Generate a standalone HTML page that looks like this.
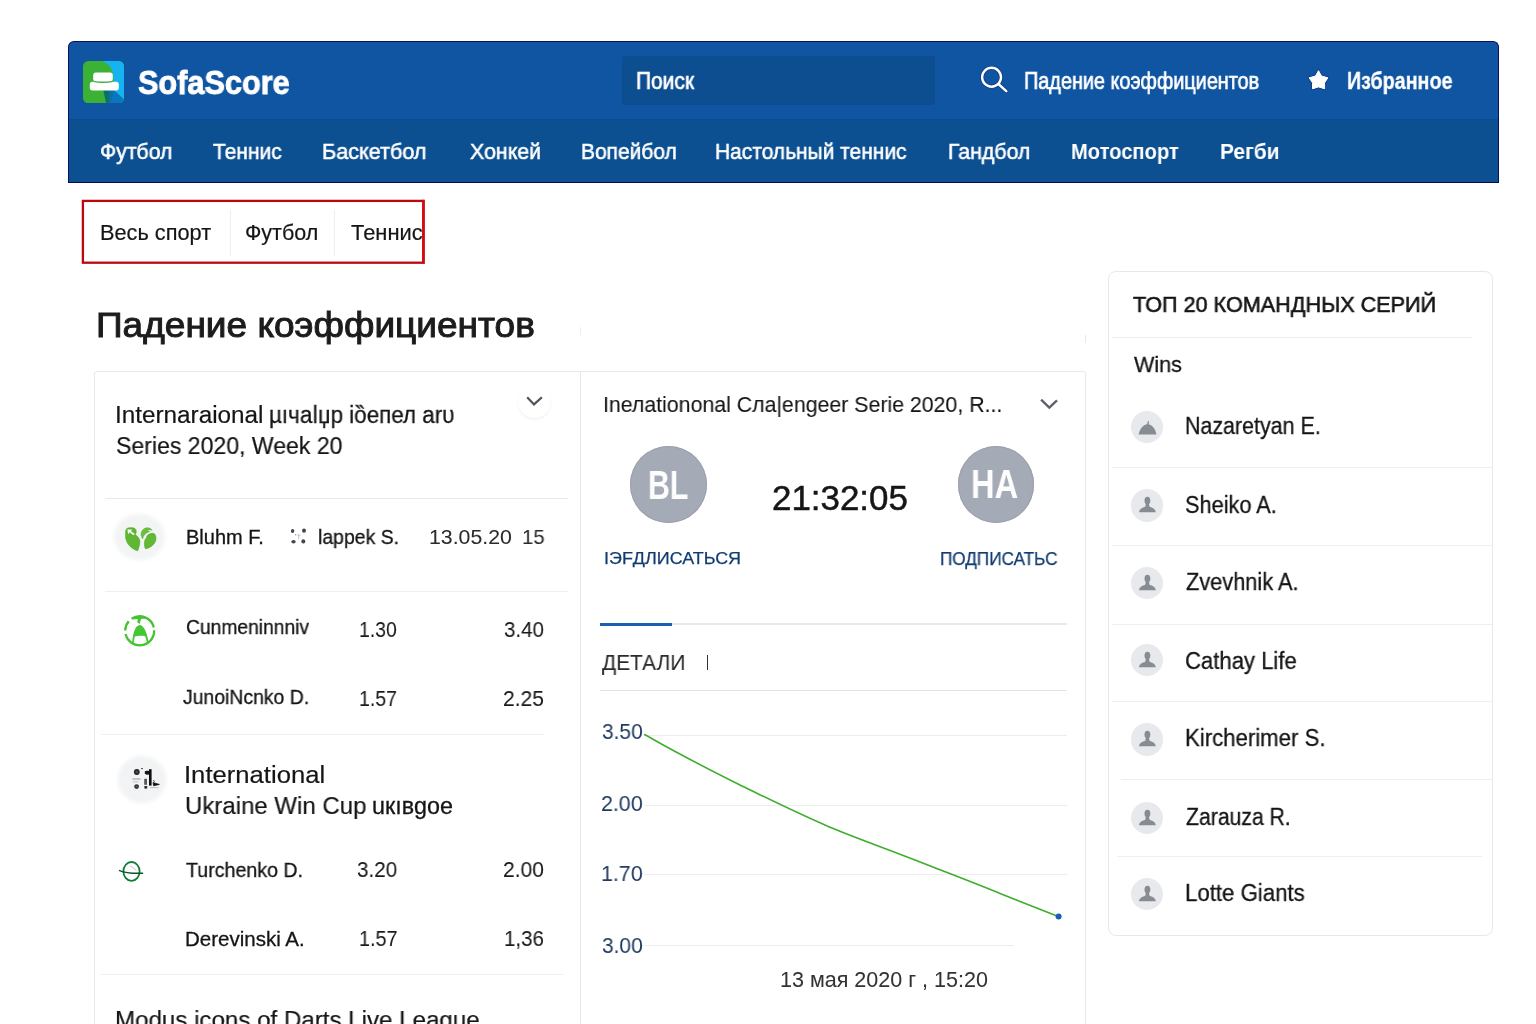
<!DOCTYPE html>
<html lang="ru">
<head>
<meta charset="utf-8">
<title>SofaScore</title>
<style>
*{box-sizing:border-box;margin:0;padding:0}
html,body{width:1536px;height:1024px;overflow:hidden;background:#fff}
body{position:relative;font-family:"Liberation Sans",sans-serif;color:#1b1b1b}
.abs{position:absolute;white-space:nowrap;line-height:1}
.t{transform-origin:0 0;will-change:transform}
#hdr{position:absolute;left:68px;top:41px;width:1431px;height:142px;background:#1055a2;border-radius:6px 6px 0 0;border:1px solid #07105e;border-bottom-color:#050a4e;overflow:hidden}
#nav{position:absolute;left:0;top:77px;width:100%;height:64px;background:#0c5091;border-top:1px solid #0b4c8b}
.hl{position:absolute;height:1px;background:#e9e9e9}
.vl{position:absolute;width:1px;background:#e9e9e9}
.circ{position:absolute;border-radius:50%}
.av{position:absolute;width:32.4px;height:32.4px;border-radius:50%;background:#e7e9ec;left:1130.8px}
</style>
</head>
<body>

<!-- HEADER -->
<div id="hdr"><div id="nav"></div></div>
<svg class="abs" style="left:82.6px;top:60.6px" width="41" height="42.4" viewBox="0 0 41 42.4">
  <defs><clipPath id="lc"><rect x="0" y="0" width="41" height="42.4" rx="5.5"/></clipPath></defs>
  <g clip-path="url(#lc)">
    <rect width="41" height="43" fill="#3bb135"/>
    <path d="M19.5 0 H41 V43 H24 L31 30 L30.6 18 C30.6 9 26.8 3.4 19.5 0Z" fill="#15b4f0"/>
    <path d="M31 29 L41 38.6 V43 H25 Z" fill="#0b76c0"/>
    <path d="M20.3 29 H31 L27 43 H23.2 Z" fill="#0d6f68"/>
    <path d="M26 29 H31 L27.4 43 H25.6 Z" fill="#0b72a0"/>
  </g>
  <rect x="10.2" y="11.6" width="19.6" height="8.8" rx="2.6" fill="#fff"/>
  <rect x="6.8" y="20.8" width="29" height="8.6" rx="2.6" fill="#fff"/>
  <path d="M11 20.6 C16 21.8 24 21.8 29.4 20.6" stroke="#1f9a2e" stroke-width="0.9" fill="none"/>
</svg>
<div class="abs" style="left:622px;top:56px;width:313px;height:48.6px;background:#0c4e90;border-radius:3px"></div>
<svg class="abs" style="left:977px;top:64px" width="34" height="32" viewBox="0 0 34 32"><g fill="none" stroke="#0b3a84" stroke-linecap="round"><circle cx="14.55" cy="13.25" r="9.45" stroke-width="3.8"/><path d="M21.6 20.2 L29.3 27.1" stroke-width="4"/></g><g fill="none" stroke="#fff" stroke-linecap="round"><circle cx="14.55" cy="13.25" r="9.45" stroke-width="2.4"/><path d="M21.4 20 L29.3 27.1" stroke-width="2.5"/></g></svg>
<svg class="abs" style="left:1307px;top:68px" width="24" height="24" viewBox="0 0 24 24"><path d="M11.5 2.6 L14.5 8 L20.9 9.8 L17.5 14.9 L17.7 20.8 L11.5 18.9 L5.5 20.8 L5.6 14.9 L2.1 9.8 L8.5 8 Z" fill="#0b3c85" stroke="#0b3c85" stroke-width="2.6" stroke-linejoin="round"/><path d="M11.5 2.6 L14.5 8 L20.9 9.8 L17.5 14.9 L17.7 20.8 L11.5 18.9 L5.5 20.8 L5.6 14.9 L2.1 9.8 L8.5 8 Z" fill="#fff" stroke="#fff" stroke-width="1" stroke-linejoin="round"/></svg>

<!-- MAIN CARD FRAME -->
<div class="abs" style="left:94px;top:371px;width:992px;height:700px;border:1px solid #e7e8e9;border-radius:3px"></div>
<div class="vl" style="left:580px;top:371px;height:660px;background:#e6e6e6"></div>

<!-- left card dividers -->
<div class="hl" style="left:105px;top:498px;width:463px"></div>
<div class="hl" style="left:105px;top:591px;width:463px;background:#efefef"></div>
<div class="hl" style="left:101px;top:734px;width:443px;background:#f1f1f1"></div>
<div class="hl" style="left:100px;top:974px;width:464px;background:#f0f0f0"></div>

<!-- chevrons -->
<div class="circ" style="left:517.5px;top:384.5px;width:33px;height:33px;background:#fff;box-shadow:0 1.5px 2.5px rgba(0,0,0,0.055)"></div>
<svg class="abs" style="left:524px;top:394px" width="20" height="14" viewBox="0 0 20 14"><path d="M3.2 3.2 L10 10.4 L17.9 3.2" fill="none" stroke="#50535a" stroke-width="2.2"/></svg>
<svg class="abs" style="left:1039px;top:397px" width="20" height="14" viewBox="0 0 20 14"><path d="M2.1 2.7 L10.3 10.6 L18 3.3" fill="none" stroke="#5d6068" stroke-width="2.3"/></svg>

<!-- left card icons -->
<div class="circ" style="left:111px;top:511px;width:57px;height:52px;background:radial-gradient(closest-side,#f2f5f4 78%,rgba(242,245,244,0) 100%)"></div>
<svg class="abs" style="left:123px;top:526px" width="36" height="28" viewBox="0 0 36 28">
  <path d="M2.6 6 C2.4 3 4.2 1.8 6.5 1.8 L10 1.8 C12.6 2 13.6 4.4 13.2 6.6 L12.2 8.6 C14.8 10.4 16.6 12.6 16.9 15.2 C16.9 18.6 15.8 22 14.6 24.8 C9.2 23.2 3.6 18.4 2.7 12 Z" fill="#5fb733" stroke="#4ea42a" stroke-width="0.6"/>
  <path d="M4.4 3.6 L9.4 3.4 L7.9 5 L11.6 8 L10.4 9.3 L6.8 6.2 L5.2 8.2 Z" fill="#fbfdfb"/>
  <path d="M18.2 9.6 C17.6 5.4 20.2 2.2 24 1.8 C26.4 1.7 28.2 2.8 29.2 4.2 L23 7.2 L20.4 10.2 L19.6 13 Z" fill="#6cc13c" stroke="#4ea42a" stroke-width="0.5"/>
  <path d="M24.2 9.6 C26.6 7.4 29.6 6.6 31.4 7.8 C33.2 9.6 33.4 12.6 32.4 15.4 C30.6 19.4 26.6 22 22.4 22.8 C21 19.4 21.2 16 22.2 13.2 L23.2 12.6 Z" fill="#62b935" stroke="#4ea42a" stroke-width="0.6"/>
  <path d="M25.4 4.6 L28.6 4.6 M26.8 5.8 L29.4 6" stroke="#f4f6f6" stroke-width="0.9" fill="none"/>
</svg>
<svg class="abs" style="left:286px;top:524px" width="24" height="24" viewBox="0 0 24 24"><g fill="#43464b"><ellipse cx="6.6" cy="7" rx="1.7" ry="2.1"/><ellipse cx="18" cy="6.6" rx="2" ry="2.2"/><ellipse cx="7.5" cy="17.8" rx="2.2" ry="1.8"/><ellipse cx="17.3" cy="17.4" rx="2" ry="2.1"/></g><path d="M10.8 11 H14.6 M12.7 11 V15.2" stroke="#b9bbbf" stroke-width="0.9" fill="none"/><circle cx="9.4" cy="10.8" r="0.7" fill="#9a9da3"/></svg>

<svg class="abs" style="left:122px;top:613px" width="36" height="36" viewBox="0 0 36 36">
  <path d="M32.19 17.29 A14.5 14.5 0 0 1 3.57 21.06 M3.20 17.55 A14.5 14.5 0 0 1 6.76 8.29 M9.59 5.78 A14.5 14.5 0 0 1 31.83 14.54" fill="none" stroke="#43c531" stroke-width="2.3"/>
  <path d="M10 31 C10.6 23 12.4 12.6 17.6 12 C22.8 12.6 25.4 22 26.8 30 L25 31 C24.6 28 24 25.4 23.2 23.2 C19.6 22.4 15.6 22.6 12.8 23.6 C12.2 26 11.8 28.6 11.6 31.4 Z" fill="#45c733"/>
  <path d="M11 5.2 C13 3.6 16 3 18.2 3.1 C20.6 3 23 3.6 25.2 5 L24.4 6 C22.6 5.6 20.4 5.6 19 6 L17.6 11 L15.4 9.4 L15.6 6 C14.2 5.8 12.6 6 11.4 6.4 Z" fill="#43c531"/>
</svg>

<div class="circ" style="left:115px;top:753px;width:54px;height:53px;background:radial-gradient(closest-side,#f2f3f4 78%,rgba(242,243,244,0) 100%)"></div>
<svg class="abs" style="left:128px;top:765px" width="36" height="28" viewBox="0 0 36 28">
  <circle cx="8.8" cy="7" r="2.9" fill="#26282b"/><circle cx="8.8" cy="7" r="1.2" fill="#4b4e52"/>
  <circle cx="8.6" cy="21.6" r="2.4" fill="#2e3034"/><circle cx="8.6" cy="21.4" r="1" fill="#5a5d61"/>
  <path d="M4.4 14 H12.6" stroke="#8d8f93" stroke-width="0.9"/><path d="M4.8 16.8 H10.4" stroke="#b5b6b9" stroke-width="0.8"/>
  <rect x="21" y="4.2" width="2.6" height="16.4" fill="#0e0f11"/>
  <path d="M16.8 6.4 C17.6 5.4 19.4 5.6 21.2 6 V9.6 C19.6 9.8 17.6 9.6 16.8 8.4 Z" fill="#141518"/>
  <rect x="16.2" y="13.8" width="2.8" height="6" fill="#55585d"/><rect x="16.4" y="21" width="2.8" height="2.6" fill="#2a2c30"/>
  <rect x="13" y="3.2" width="2" height="0.9" fill="#3a3c40"/>
  <path d="M25 15.6 L27 16.4 M25 17.6 L31.4 19.4 L25.6 20.8 Z" fill="#0e0f11" stroke="#0e0f11" stroke-width="0.7"/>
  <path d="M22 22.6 H30.6" stroke="#9b9da1" stroke-width="0.6"/>
</svg>

<svg class="abs" style="left:116px;top:858px" width="30" height="26" viewBox="0 0 30 26">
  <ellipse cx="15.5" cy="13.4" rx="8.1" ry="9.4" fill="none" stroke="#107a36" stroke-width="1.8"/>
  <path d="M3.6 12.6 C9 14.8 19 15.6 26.6 15.2" stroke="#0b5526" stroke-width="1.5" fill="none" stroke-linecap="round"/>
  <path d="M14 7.6 L20.4 12.4" stroke="#bdbcc4" stroke-width="0.9"/>
</svg>

<!-- middle panel -->
<div class="circ" style="left:629.8px;top:446.4px;width:77.4px;height:77px;background:#a5abb6;box-shadow:inset 0 0 0 1px #9aa0ac"></div>
<div class="circ" style="left:957.8px;top:446.4px;width:76.4px;height:76.6px;background:#a5abb6;box-shadow:inset 0 0 0 1px #9aa0ac"></div>
<div class="hl" style="left:600px;top:623px;width:467px;height:2px;background:#e7e9ec"></div>
<div class="hl" style="left:600px;top:622.5px;width:72px;height:3px;background:#1a5fb4"></div>
<div class="vl" style="left:706.8px;top:654.5px;height:15.5px;width:1.2px;background:#333"></div>
<div class="hl" style="left:600px;top:690px;width:467px;background:#e3e3e3"></div>
<div class="hl" style="left:644px;top:735px;width:423px;background:#ededed"></div>
<div class="hl" style="left:644px;top:805px;width:423px;background:#ededed"></div>
<div class="hl" style="left:644px;top:874px;width:423px;background:#ededed"></div>
<div class="hl" style="left:644px;top:945px;width:370px;background:#ededed"></div>
<svg class="abs" style="left:0;top:0" width="1536" height="1024" viewBox="0 0 1536 1024">
  <path d="M644.2 734.2 C656 741 668 748 680.4 754.2 C701 765.5 722 776 742.5 786.3 C771 800 800 814.5 828.8 826.7 C857 838.5 886 848.5 915 860 C944 871.5 972 882 1001.3 894 C1020 901.5 1039 909 1058.3 916.4" fill="none" stroke="#3fad2e" stroke-width="1.6"/>
  <circle cx="1058.6" cy="916.6" r="3" fill="#1a5fb4"/>
</svg>

<!-- sidebar -->
<div class="abs" style="left:1108px;top:271px;width:385px;height:665px;border:1px solid #e8e8ea;border-radius:8px"></div>
<div class="hl" style="left:1112px;top:337px;width:360px;background:#ededed"></div>
<div class="hl" style="left:1112px;top:467px;width:380px;background:#efefef"></div>
<div class="hl" style="left:1112px;top:545px;width:380px;background:#efefef"></div>
<div class="hl" style="left:1112px;top:624px;width:380px;background:#efefef"></div>
<div class="hl" style="left:1112px;top:701px;width:380px;background:#efefef"></div>
<div class="hl" style="left:1121px;top:779px;width:371px;background:#efefef"></div>
<div class="hl" style="left:1117px;top:856px;width:365px;background:#efefef"></div>
<div class="av" style="top:410.6px"></div>
<svg class="abs" style="left:1131px;top:410.6px" width="33" height="33" viewBox="0 0 33 33"><path d="M7.6 23.6 C8.6 17.6 12.6 13.6 16.6 13 C20.6 13.6 24.6 17.6 25.4 23.6 Z" fill="#878b92"/><path d="M16.2 13.6 L17.4 10 L17.6 13.6 Z" fill="#878b92" stroke="#878b92" stroke-width="0.6"/></svg>
<div class="av" style="top:489.4px"></div>
<svg class="abs" style="left:1131px;top:489.4px" width="33" height="33" viewBox="0 0 33 33"><ellipse cx="16.4" cy="11.6" rx="2.9" ry="3.9" fill="#878b92"/><path d="M8 23.2 C8.4 19.8 11.6 18.8 14.2 17.8 L14.8 15 H18 L18.6 17.8 C21.2 18.8 24.4 19.8 24.8 23.2 Z" fill="#878b92"/></svg>
<div class="av" style="top:566.7px"></div>
<svg class="abs" style="left:1131px;top:566.7px" width="33" height="33" viewBox="0 0 33 33"><ellipse cx="16.4" cy="11.6" rx="2.9" ry="3.9" fill="#878b92"/><path d="M8 23.2 C8.4 19.8 11.6 18.8 14.2 17.8 L14.8 15 H18 L18.6 17.8 C21.2 18.8 24.4 19.8 24.8 23.2 Z" fill="#878b92"/></svg>
<div class="av" style="top:643.9px"></div>
<svg class="abs" style="left:1131px;top:643.9px" width="33" height="33" viewBox="0 0 33 33"><ellipse cx="16.4" cy="11.6" rx="2.9" ry="3.9" fill="#878b92"/><path d="M8 23.2 C8.4 19.8 11.6 18.8 14.2 17.8 L14.8 15 H18 L18.6 17.8 C21.2 18.8 24.4 19.8 24.8 23.2 Z" fill="#878b92"/></svg>
<div class="av" style="top:723.4px"></div>
<svg class="abs" style="left:1131px;top:723.4px" width="33" height="33" viewBox="0 0 33 33"><ellipse cx="16.4" cy="11.6" rx="2.9" ry="3.9" fill="#878b92"/><path d="M8 23.2 C8.4 19.8 11.6 18.8 14.2 17.8 L14.8 15 H18 L18.6 17.8 C21.2 18.8 24.4 19.8 24.8 23.2 Z" fill="#878b92"/></svg>
<div class="av" style="top:802.1px"></div>
<svg class="abs" style="left:1131px;top:802.1px" width="33" height="33" viewBox="0 0 33 33"><ellipse cx="16.4" cy="11.6" rx="2.9" ry="3.9" fill="#878b92"/><path d="M8 23.2 C8.4 19.8 11.6 18.8 14.2 17.8 L14.8 15 H18 L18.6 17.8 C21.2 18.8 24.4 19.8 24.8 23.2 Z" fill="#878b92"/></svg>
<div class="av" style="top:878.0px"></div>
<svg class="abs" style="left:1131px;top:878.0px" width="33" height="33" viewBox="0 0 33 33"><ellipse cx="16.4" cy="11.6" rx="2.9" ry="3.9" fill="#878b92"/><path d="M8 23.2 C8.4 19.8 11.6 18.8 14.2 17.8 L14.8 15 H18 L18.6 17.8 C21.2 18.8 24.4 19.8 24.8 23.2 Z" fill="#878b92"/></svg>


<div class="abs t" style="left:138.22px;top:66.00px;font-size:33.11px;color:#ffffff;transform:scaleX(0.9266);font-weight:bold;-webkit-text-stroke:0.9px #ffffff">SofaScore</div>
<div class="abs t" style="left:636.33px;top:69.00px;font-size:23.78px;color:#ffffff;transform:scaleX(0.8812);-webkit-text-stroke:0.7px #ffffff">Поиск</div>
<div class="abs t" style="left:1024.06px;top:69.00px;font-size:23.78px;color:#ffffff;transform:scaleX(0.8349);-webkit-text-stroke:0.7px #ffffff">Падение коэффициентов</div>
<div class="abs t" style="left:1347.10px;top:69.00px;font-size:23.78px;color:#ffffff;transform:scaleX(0.8294);font-weight:bold;-webkit-text-stroke:0.3px #ffffff">Избранное</div>
<div class="abs t" style="left:100.31px;top:141.00px;font-size:22.34px;color:#ffffff;transform:scaleX(0.9513);-webkit-text-stroke:0.55px #ffffff">Футбол</div>
<div class="abs t" style="left:213.26px;top:141.00px;font-size:22.34px;color:#ffffff;transform:scaleX(0.9390);-webkit-text-stroke:0.55px #ffffff">Теннис</div>
<div class="abs t" style="left:322.30px;top:141.00px;font-size:22.34px;color:#ffffff;transform:scaleX(0.9678);-webkit-text-stroke:0.55px #ffffff">Баскетбол</div>
<div class="abs t" style="left:469.56px;top:141.00px;font-size:22.34px;color:#ffffff;transform:scaleX(0.9567);-webkit-text-stroke:0.55px #ffffff">Хонкей</div>
<div class="abs t" style="left:580.92px;top:141.00px;font-size:22.34px;color:#ffffff;transform:scaleX(0.9388);-webkit-text-stroke:0.55px #ffffff">Вопейбол</div>
<div class="abs t" style="left:715.32px;top:141.00px;font-size:22.34px;color:#ffffff;transform:scaleX(0.9390);-webkit-text-stroke:0.55px #ffffff">Настольный теннис</div>
<div class="abs t" style="left:948.31px;top:141.00px;font-size:22.34px;color:#ffffff;transform:scaleX(0.9543);-webkit-text-stroke:0.55px #ffffff">Гандбол</div>
<div class="abs t" style="left:1071.10px;top:141.00px;font-size:22.34px;color:#ffffff;transform:scaleX(0.9025);font-weight:bold">Мотоспорт</div>
<div class="abs t" style="left:1220.06px;top:141.00px;font-size:22.34px;color:#ffffff;transform:scaleX(0.9378);font-weight:bold">Регби</div>
<div class="abs t" style="left:96.05px;top:308.00px;font-size:35.88px;color:#1c1c1c;transform:scaleX(1.0320);-webkit-text-stroke:1.0px #1c1c1c">Падение коэффициентов</div>
<div class="abs t" style="left:114.78px;top:403.00px;font-size:24.09px;color:#151515;transform:scaleX(1.0084);-webkit-text-stroke:0.2px #151515">Internaraional</div>
<div class="abs t" style="left:269.19px;top:404.00px;font-size:23.57px;color:#151515;transform:scaleX(0.9516);-webkit-text-stroke:0.3px #151515">µıчаǀџр iȍепел аrυ</div>
<div class="abs t" style="left:115.82px;top:435.00px;font-size:23.57px;color:#151515;transform:scaleX(0.9787);-webkit-text-stroke:0.2px #151515">Series 2020, Week 20</div>
<div class="abs t" style="left:185.75px;top:527.00px;font-size:19.99px;color:#151515;transform:scaleX(0.9962);-webkit-text-stroke:0.3px #151515">Bluhm F.</div>
<div class="abs t" style="left:317.87px;top:527.00px;font-size:19.99px;color:#151515;transform:scaleX(0.9720);-webkit-text-stroke:0.3px #151515">lappek S.</div>
<div class="abs t" style="left:429.41px;top:526.00px;font-size:21.01px;color:#2a2a2a;transform:scaleX(1.0135);-webkit-text-stroke:0.05px #2a2a2a">13.05.20</div>
<div class="abs t" style="left:521.86px;top:526.00px;font-size:21.01px;color:#2a2a2a;transform:scaleX(0.9664);-webkit-text-stroke:0.05px #2a2a2a">15</div>
<div class="abs t" style="left:185.78px;top:617.00px;font-size:19.99px;color:#151515;transform:scaleX(0.9633);-webkit-text-stroke:0.3px #151515">Cunmeninnniv</div>
<div class="abs t" style="left:359.44px;top:620.00px;font-size:21.52px;color:#1a1a1a;transform:scaleX(0.9002);-webkit-text-stroke:0.08px #1a1a1a">1.30</div>
<div class="abs t" style="left:503.84px;top:620.00px;font-size:21.52px;color:#1a1a1a;transform:scaleX(0.9526);-webkit-text-stroke:0.08px #1a1a1a">3.40</div>
<div class="abs t" style="left:182.75px;top:687.00px;font-size:19.99px;color:#151515;transform:scaleX(0.9704);-webkit-text-stroke:0.3px #151515">JunoiNcnko D.</div>
<div class="abs t" style="left:359.43px;top:689.00px;font-size:21.52px;color:#1a1a1a;transform:scaleX(0.9052);-webkit-text-stroke:0.08px #1a1a1a">1.57</div>
<div class="abs t" style="left:502.86px;top:689.00px;font-size:21.52px;color:#1a1a1a;transform:scaleX(0.9759);-webkit-text-stroke:0.08px #1a1a1a">2.25</div>
<div class="abs t" style="left:184.02px;top:763.00px;font-size:24.6px;color:#151515;transform:scaleX(1.0424);-webkit-text-stroke:0.2px #151515">International</div>
<div class="abs t" style="left:185.12px;top:794.00px;font-size:24.6px;color:#151515;transform:scaleX(0.9761);-webkit-text-stroke:0.2px #151515">Ukraine Win Cup</div>
<div class="abs t" style="left:372.14px;top:795.00px;font-size:23.06px;color:#151515;transform:scaleX(1.0117);-webkit-text-stroke:0.3px #151515">uкıвgoe</div>
<div class="abs t" style="left:186.14px;top:860.00px;font-size:20.5px;color:#151515;transform:scaleX(0.9570);-webkit-text-stroke:0.3px #151515">Turchenko D.</div>
<div class="abs t" style="left:357.04px;top:860.00px;font-size:21.52px;color:#1a1a1a;transform:scaleX(0.9574);-webkit-text-stroke:0.08px #1a1a1a">3.20</div>
<div class="abs t" style="left:502.86px;top:860.00px;font-size:21.52px;color:#1a1a1a;transform:scaleX(0.9759);-webkit-text-stroke:0.08px #1a1a1a">2.00</div>
<div class="abs t" style="left:185.15px;top:929.00px;font-size:20.5px;color:#151515;transform:scaleX(0.9969);-webkit-text-stroke:0.3px #151515">Derevinski A.</div>
<div class="abs t" style="left:359.42px;top:929.00px;font-size:21.52px;color:#1a1a1a;transform:scaleX(0.9177);-webkit-text-stroke:0.08px #1a1a1a">1.57</div>
<div class="abs t" style="left:503.89px;top:929.00px;font-size:21.52px;color:#1a1a1a;transform:scaleX(0.9515);-webkit-text-stroke:0.08px #1a1a1a">1,36</div>
<div class="abs t" style="left:114.74px;top:1008.00px;font-size:24.6px;color:#151515;transform:scaleX(0.9806);-webkit-text-stroke:0.2px #151515">Modus icons of Darts Live League</div>
<div class="abs t" style="left:603.16px;top:394.00px;font-size:22.55px;color:#151515;transform:scaleX(0.9451);-webkit-text-stroke:0.1px #151515">Inелationonal Сла|engeer Serie 2020, R...</div>
<div class="abs t" style="left:647.78px;top:466.00px;font-size:39.97px;color:#fdfdfd;transform:scaleX(0.7589);font-weight:bold">BL</div>
<div class="abs t" style="left:970.76px;top:465.00px;font-size:39.97px;color:#fdfdfd;transform:scaleX(0.8184);font-weight:bold">HA</div>
<div class="abs t" style="left:771.65px;top:481.00px;font-size:34.75px;color:#161616;transform:scaleX(1.0042);-webkit-text-stroke:0.5px #161616">21:32:05</div>
<div class="abs t" style="left:604.07px;top:551.00px;font-size:16.91px;color:#113c70;transform:scaleX(1.0615);-webkit-text-stroke:0.25px #113c70">IЭFДЛИСАТЬСЯ</div>
<div class="abs t" style="left:939.96px;top:551.00px;font-size:17.83px;color:#113c70;transform:scaleX(0.9619);-webkit-text-stroke:0.25px #113c70">ПОДПИСАТЬС</div>
<div class="abs t" style="left:602.42px;top:652.00px;font-size:22.04px;color:#2a2a2a;transform:scaleX(0.9491);-webkit-text-stroke:0.05px #2a2a2a">ДЕТАЛИ</div>
<div class="abs t" style="left:602.02px;top:721.00px;font-size:22.04px;color:#1f3a5f;transform:scaleX(0.9490);-webkit-text-stroke:0.05px #1f3a5f">3.50</div>
<div class="abs t" style="left:601.05px;top:793.00px;font-size:22.04px;color:#1f3a5f;transform:scaleX(0.9718);-webkit-text-stroke:0.05px #1f3a5f">2.00</div>
<div class="abs t" style="left:601.05px;top:863.00px;font-size:22.04px;color:#1f3a5f;transform:scaleX(0.9718);-webkit-text-stroke:0.05px #1f3a5f">1.70</div>
<div class="abs t" style="left:602.02px;top:935.00px;font-size:22.04px;color:#1f3a5f;transform:scaleX(0.9490);-webkit-text-stroke:0.05px #1f3a5f">3.00</div>
<div class="abs t" style="left:779.52px;top:970.00px;font-size:21.52px;color:#333;transform:scaleX(1.0008);-webkit-text-stroke:0.05px #333">13 мая 2020 г , 15:20</div>
<div class="abs t" style="left:1132.89px;top:294.00px;font-size:22.55px;color:#151515;transform:scaleX(0.9585);-webkit-text-stroke:0.6px #151515">ТОП 20 КОМАНДНЫХ СЕРИЙ</div>
<div class="abs t" style="left:1133.54px;top:354.00px;font-size:22.55px;color:#151515;transform:scaleX(0.9575);-webkit-text-stroke:0.3px #151515">Wins</div>
<div class="abs t" style="left:1185.02px;top:415.00px;font-size:23.27px;color:#151515;transform:scaleX(0.9204);-webkit-text-stroke:0.3px #151515">Nazaretyan E.</div>
<div class="abs t" style="left:1185.01px;top:494.00px;font-size:23.27px;color:#151515;transform:scaleX(0.9341);-webkit-text-stroke:0.3px #151515">Sheiko A.</div>
<div class="abs t" style="left:1185.94px;top:571.00px;font-size:23.27px;color:#151515;transform:scaleX(0.9362);-webkit-text-stroke:0.3px #151515">Zvevhnik A.</div>
<div class="abs t" style="left:1184.99px;top:650.00px;font-size:23.27px;color:#151515;transform:scaleX(0.9496);-webkit-text-stroke:0.3px #151515">Cathay Life</div>
<div class="abs t" style="left:1184.99px;top:727.00px;font-size:23.27px;color:#151515;transform:scaleX(0.9531);-webkit-text-stroke:0.3px #151515">Kircherimer S.</div>
<div class="abs t" style="left:1185.94px;top:806.00px;font-size:23.27px;color:#151515;transform:scaleX(0.9103);-webkit-text-stroke:0.3px #151515">Zarauza R.</div>
<div class="abs t" style="left:1184.99px;top:882.00px;font-size:23.27px;color:#151515;transform:scaleX(0.9547);-webkit-text-stroke:0.3px #151515">Lotte Giants</div>
<div class="abs t" style="left:99.59px;top:223.00px;font-size:21.52px;color:#151515;transform:scaleX(1.0107);-webkit-text-stroke:0.2px #151515">Весь спорт</div>
<div class="abs t" style="left:244.60px;top:223.00px;font-size:21.52px;color:#151515;transform:scaleX(1.0002);-webkit-text-stroke:0.2px #151515">Футбол</div>
<div class="abs t" style="left:350.60px;top:223.00px;font-size:21.52px;color:#151515;transform:scaleX(1.0172);-webkit-text-stroke:0.2px #151515">Теннис</div>

<!-- red highlight box -->
<div class="vl" style="left:230px;top:210px;height:46px;background:#eeeeee"></div>
<div class="vl" style="left:334px;top:210px;height:46px;background:#eeeeee"></div>
<div class="abs" style="left:423px;top:198px;width:40px;height:68px;background:#fff"></div>
<svg class="abs" style="left:78px;top:196px" width="352" height="72" viewBox="78 196 352 72"><rect x="82.9" y="200.9" width="340.6" height="61.8" fill="none" stroke="#bb080e" stroke-width="2.3"/><path d="M423.4 199.8 V263.8" stroke="#d20c0e" stroke-width="2.6"/></svg>
<div class="vl" style="left:580px;top:327px;height:8px;background:#efefef"></div>
<div class="vl" style="left:1085px;top:335px;height:8px;background:#e9e9e9"></div>

</body>
</html>
